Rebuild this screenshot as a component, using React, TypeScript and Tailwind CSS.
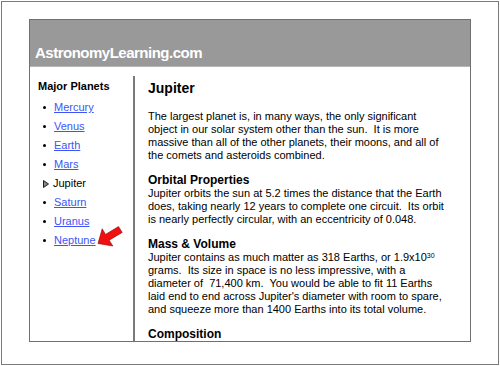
import React from 'react';

const planets = ['Mercury', 'Venus', 'Earth', 'Mars', 'Jupiter', 'Saturn', 'Uranus', 'Neptune'];

function Arrow() {
  return (
    <svg width="28" height="25" viewBox="0 0 28 25" className="absolute left-[96px] top-[224px]">
      <polygon
        points="2,19.5 6.2,4.8 9.5,10.4 22.5,2.6 26.2,8.4 13.2,16.2 16.8,22"
        fill="#f01010"
        stroke="#8a0000"
        strokeWidth="0.6"
        strokeLinejoin="round"
      />
    </svg>
  );
}

export default function App() {
  return (
    <div className="relative h-[366px] w-[500px] bg-white p-px font-['Liberation_Sans',Arial,sans-serif] text-[11px] leading-[13px] text-black">
      <div className="h-full border border-[#7a7a7a] pl-[27px] pt-[17px]">
        <div className="flex h-[323px] w-[442px] flex-col border border-[#707070]">
          {/* header band */}
          <div className="h-[47px] border-b border-[#b5b5b5] bg-[#999999] pl-[5px] pt-[24px]">
            <div className="text-[15px] font-bold leading-[18px] tracking-[-0.5px] text-white">
              AstronomyLearning.com
            </div>
          </div>

          <div className="flex flex-1 pt-[9px]">
            {/* sidebar */}
            <div className="w-[105px] shrink-0 border-r-2 border-[#7a7a7a] pl-[8px] pt-[4px]">
              <div className="font-bold">Major Planets</div>
              <ul className="mt-[8px] flex flex-col gap-[6px]">
                {planets.map((p) => (
                  <li key={p} className="flex items-center">
                    {p === 'Jupiter' ? (
                      <svg width="6" height="8" viewBox="0 0 6 8" className="ml-[5px] mr-[4px]">
                        <polygon points="0.5,0.5 5.5,4 0.5,7.5" fill="#888" stroke="#222" strokeWidth="1" />
                      </svg>
                    ) : (
                      <span className="ml-[5px] mr-[8px] h-[3px] w-[3px] rounded-full bg-black" />
                    )}
                    {p === 'Jupiter' ? (
                      <span>{p}</span>
                    ) : (
                      <a href="#" className="text-[#3d55f5] underline">
                        {p}
                      </a>
                    )}
                  </li>
                ))}
              </ul>
            </div>

            {/* content */}
            <div className="flex-1 overflow-hidden pl-[13px] pt-[3px]">
              <h1 className="text-[14px] font-bold leading-[18px]">Jupiter</h1>
              <p className="mt-[13px]">
                The largest planet is, in many ways, the only significant
                <br />
                object in our solar system other than the sun.&nbsp; It is more
                <br />
                massive than all of the other planets, their moons, and all of
                <br />
                the comets and asteroids combined.
              </p>
              <h2 className="mt-[12px] text-[12px] font-bold">Orbital Properties</h2>
              <p>
                Jupiter orbits the sun at 5.2 times the distance that the Earth
                <br />
                does, taking nearly 12 years to complete one circuit.&nbsp; Its orbit
                <br />
                is nearly perfectly circular, with an eccentricity of 0.048.
              </p>
              <h2 className="mt-[12px] text-[12px] font-bold">Mass &amp; Volume</h2>
              <p>
                Jupiter contains as much matter as 318 Earths, or 1.9x10
                <sup className="text-[7px]">30</sup>
                <br />
                grams.&nbsp; Its size in space is no less impressive, with a
                <br />
                diameter of&nbsp; 71,400 km.&nbsp; You would be able to fit 11 Earths
                <br />
                laid end to end across Jupiter's diameter with room to spare,
                <br />
                and squeeze more than 1400 Earths into its total volume.
              </p>
              <h2 className="mt-[12px] text-[12px] font-bold">Composition</h2>
            </div>
          </div>
        </div>
      </div>
      <Arrow />
    </div>
  );
}
